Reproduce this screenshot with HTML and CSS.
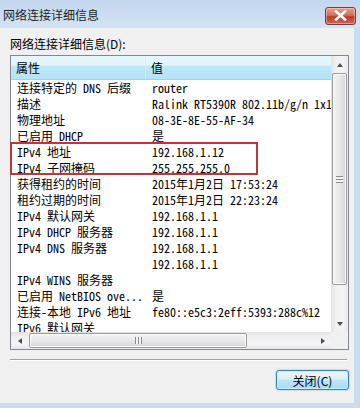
FILE: index.html
```html
<!DOCTYPE html>
<html lang="zh-CN">
<head>
  <meta charset="UTF-8" />
  <title>网络连接详细信息</title>
  <link rel="stylesheet" href="styles.css">
</head>
<body>

<div class="window">
  <div class="titlebar">
    <span class="title">网络连接详细信息</span>
    <span class="close">
      <svg width="15" height="11" viewBox="0 0 15 11"><path d="M3 1.5 L12 9.5 M12 1.5 L3 9.5" stroke="#fff" stroke-width="2.6" stroke-linecap="square"/></svg>
    </span>
  </div>

  <div class="frame">
    <div class="client">
      <div class="caption">网络连接详细信息(D):</div>

      <div class="list">
        <div class="view">
          <div class="row head"><span class="name">属性</span><span class="value">值</span></div>
          <div class="row"><span class="name">连接特定的 DNS 后缀</span><span class="value">router</span></div>
          <div class="row"><span class="name">描述</span><span class="value">Ralink RT5390R 802.11b/g/n 1x1</span></div>
          <div class="row"><span class="name">物理地址</span><span class="value">08-3E-8E-55-AF-34</span></div>
          <div class="row"><span class="name">已启用 DHCP</span><span class="value">是</span></div>
          <div class="row"><span class="name">IPv4 地址</span><span class="value">192.168.1.12</span></div>
          <div class="row"><span class="name">IPv4 子网掩码</span><span class="value">255.255.255.0</span></div>
          <div class="row"><span class="name">获得租约的时间</span><span class="value">2015年1月2日 17:53:24</span></div>
          <div class="row"><span class="name">租约过期的时间</span><span class="value">2015年1月2日 22:23:24</span></div>
          <div class="row"><span class="name">IPv4 默认网关</span><span class="value">192.168.1.1</span></div>
          <div class="row"><span class="name">IPv4 DHCP 服务器</span><span class="value">192.168.1.1</span></div>
          <div class="row"><span class="name">IPv4 DNS 服务器</span><span class="value">192.168.1.1</span></div>
          <div class="row"><span class="name"></span><span class="value">192.168.1.1</span></div>
          <div class="row"><span class="name">IPv4 WINS 服务器</span><span class="value"></span></div>
          <div class="row"><span class="name">已启用 NetBIOS ove...</span><span class="value">是</span></div>
          <div class="row"><span class="name">连接-本地 IPv6 地址</span><span class="value">fe80::e5c3:2eff:5393:288c%12</span></div>
          <div class="row"><span class="name">IPv6 默认网关</span><span class="value"></span></div>
        </div>

        <div class="vscroll">
          <div class="sb-btn"><span class="arrow up"></span></div>
          <div class="thumb v"><span class="grip"></span></div>
          <div class="track"></div>
          <div class="sb-btn"><span class="arrow down"></span></div>
        </div>

        <div class="hscroll">
          <div class="sb-btn"><span class="arrow left"></span></div>
          <div class="thumb h"><span class="grip"></span></div>
          <div class="track"></div>
          <div class="sb-btn"><span class="arrow right"></span></div>
        </div>

        <div class="corner"></div>

        <div class="mark"></div>
      </div>

      <div class="sep"></div>

      <div class="actions">
        <button class="button">关闭(C)</button>
      </div>
    </div>
  </div>
</div>

</body>
</html>
```

FILE: styles.css
```css
body, html {
  margin: 0;
  padding: 0;
  background: #f0f0f0;
}

.window {
  width: 360px;
  height: 408px;
  display: flex;
  flex-direction: column;
  background: #c9dcf0;
  font-family: "Noto Sans Mono CJK SC", "Noto Sans CJK SC", "Liberation Mono", monospace;
  font-size: 12px;
  color: #000;
  overflow: hidden;
}

.titlebar {
  height: 28px;
  display: flex;
  align-items: center;
  justify-content: space-between;
  padding: 0 4px 0 3px;
  background: linear-gradient(#c2d6ee, #d4e3f4);
}

.title {
  font-family: "Noto Sans CJK SC", sans-serif;
  font-size: 12px;
  color: #1e1e1e;
  margin-top: 1px;
}

.close {
  width: 29px;
  height: 16px;
  margin-top: 3px;
  display: flex;
  align-items: center;
  justify-content: center;
  border: 1px solid #7e3a3a;
  border-radius: 3px;
  background: linear-gradient(#e3a091 0%, #d0715d 45%, #bd3a2a 55%, #cd6a55 100%);
  box-shadow: inset 0 0 0 1px rgba(255,255,255,0.35);
}

.frame {
  flex: 1;
  display: flex;
  padding: 0 6px 5px 0;
}

.client {
  flex: 1;
  display: flex;
  flex-direction: column;
  padding: 0 5px 0 10px;
  background: #f0f0f0;
}

.caption {
  font-family: "Noto Sans CJK SC", sans-serif;
  font-size: 12px;
  line-height: 16px;
  padding: 8px 0 3px 0;
}

.list {
  position: relative;
  height: 295px;
  box-sizing: border-box;
  border: 1px solid #828790;
  background: #fff;
  display: grid;
  grid-template-columns: 1fr 17px;
  grid-template-rows: 1fr 17px;
}

.view {
  overflow: hidden;
}

.row {
  display: flex;
  height: 16px;
  line-height: 16px;
  white-space: nowrap;
}

.row .name {
  width: 129px;
  padding-left: 6px;
  flex: none;
  overflow: hidden;
}

.row .value {
  padding-left: 6px;
}

.row.head {
  height: 24px;
  line-height: 24px;
  background: linear-gradient(#e6f6fc 0%, #e2f4fb 40%, #bce8f8 45%, #b4e4f6 100%);
  border-bottom: 1px solid #9ed3e9;
  box-sizing: border-box;
  font-family: "Noto Sans CJK SC", sans-serif;
}

.row.head .name {
  border-right: 1px solid #d4eef8;
  padding-left: 5px;
}

.row.head .value {
  padding-left: 5px;
}

.vscroll, .hscroll {
  display: flex;
  background: linear-gradient(90deg, #e3e3e3, #f1f1f1 30%, #f4f4f4 70%, #e8e8e8);
}

.vscroll {
  flex-direction: column;
}

.hscroll {
  background: linear-gradient(#e3e3e3, #f1f1f1 30%, #f4f4f4 70%, #e8e8e8);
}

.sb-btn {
  width: 17px;
  height: 17px;
  flex: none;
  display: flex;
  align-items: center;
  justify-content: center;
}

.track {
  flex: 1;
}

.arrow {
  width: 0;
  height: 0;
  border: 3px solid transparent;
}

.arrow.up { border-bottom: 4px solid #4e4e4e; border-top-width: 0; }
.arrow.down { border-top: 4px solid #4e4e4e; border-bottom-width: 0; }
.arrow.left { border-right: 4px solid #4e4e4e; border-left-width: 0; }
.arrow.right { border-left: 4px solid #4e4e4e; border-right-width: 0; }

.thumb {
  box-sizing: border-box;
  border: 1px solid #9a9a9a;
  border-radius: 2px;
  display: flex;
  align-items: center;
  justify-content: center;
  box-shadow: inset 0 0 0 1px #fbfbfb;
}

.thumb.v {
  height: 212px;
  margin: 0 1px;
  background: linear-gradient(90deg, #f3f3f3, #e8e8e8 50%, #d6d6d6);
}

.thumb.h {
  width: 218px;
  margin: 1px 0 1px 1px;
  background: linear-gradient(#f3f3f3, #e8e8e8 50%, #d6d6d6);
}

.thumb.v .grip {
  width: 7px;
  height: 7px;
  background: repeating-linear-gradient(#8a8a8a 0 1px, #f4f4f4 1px 3px);
}

.thumb.h .grip {
  width: 7px;
  height: 7px;
  background: repeating-linear-gradient(90deg, #8a8a8a 0 1px, #f4f4f4 1px 3px);
}

.corner {
  background: #f0f0f0;
}

.mark {
  position: absolute;
  left: -1px;
  top: 86px;
  width: 248px;
  height: 33px;
  box-sizing: border-box;
  border: 2px solid #c1343a;
}

.sep {
  margin-top: 9px;
  height: 0;
  border-top: 1px solid #a0a0a0;
  border-bottom: 1px solid #fff;
  margin-right: 2px;
}

.actions {
  display: flex;
  justify-content: flex-end;
  padding-top: 9px;
}

.button {
  width: 73px;
  height: 20px;
  padding: 0;
  font-family: "Noto Sans CJK SC", sans-serif;
  font-size: 12px;
  color: #000;
  border: 1px solid #3c7fb1;
  border-radius: 3px;
  background: linear-gradient(#eaf6fd 0%, #d9f0fc 45%, #bee6fd 50%, #a7d9f5 100%);
  box-shadow: inset 0 0 0 1px #c9ecff, 0 0 2px #6bb7e6;
}
```
